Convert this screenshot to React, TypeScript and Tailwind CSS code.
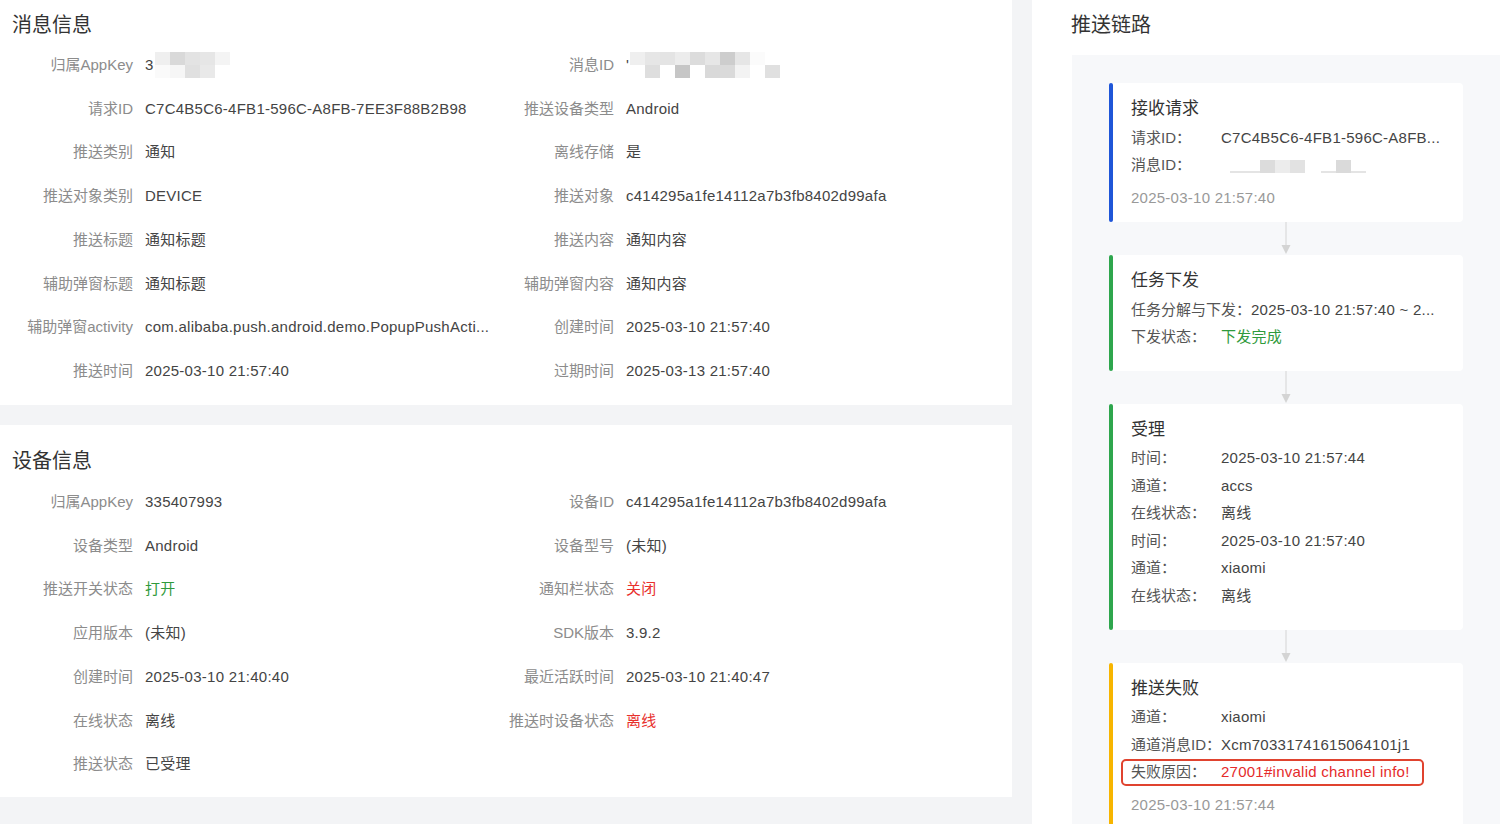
import React from 'react';

type Cell = string;

// 马赛克块（遮挡的敏感信息）
function Mosaic({ rows, cell = 'w-[15px] h-[13px]' }: { rows: Cell[][]; cell?: string }) {
  return (
    <div className="inline-flex flex-col align-middle">
      {rows.map((r, i) => (
        <div key={i} className="flex">
          {r.map((c, j) => (
            <div key={j} className={`${cell} ${c}`} />
          ))}
        </div>
      ))}
    </div>
  );
}

const appKeyBlur: Cell[][] = [
  ['bg-[#efefef]', 'bg-[#d9d9d9]', 'bg-[#e3e3e3]', 'bg-[#e6e6e6]', 'bg-[#f4f4f4]'],
  ['bg-[#fafafa]', 'bg-[#f6f6f6]', 'bg-[#e0e0e0]', 'bg-[#e9e9e9]', 'bg-white'],
];

const msgIdBlur: Cell[][] = [
  ['bg-[#efefef]', 'bg-[#e6e6e6]', 'bg-[#e4e4e4]', 'bg-[#ececec]', 'bg-[#dcdcdc]', 'bg-[#e6e6e6]', 'bg-[#cdcdcd]', 'bg-[#e6e6e6]', 'bg-[#fbfbfb]', 'bg-white'],
  ['bg-white', 'bg-[#dedede]', 'bg-white', 'bg-[#c6c6c6]', 'bg-white', 'bg-[#d9d9d9]', 'bg-[#dadada]', 'bg-[#f3f3f3]', 'bg-white', 'bg-[#e0e0e0]'],
];

function Field({
  label,
  children,
  labelW = 'w-[133px]',
  valueClass = 'text-[#444]',
}: {
  label?: string;
  children?: React.ReactNode;
  labelW?: string;
  valueClass?: string;
}) {
  return (
    <div className="flex items-center h-[43.7px] min-w-0">
      <div className={`${labelW} shrink-0 text-right text-[#8c8c8c] whitespace-nowrap`}>{label}</div>
      <div className={`ml-3 min-w-0 whitespace-nowrap tracking-[0.25px] ${valueClass}`}>{children}</div>
    </div>
  );
}

type Row = [string, React.ReactNode, string?];

function InfoPanel({
  title,
  rows,
  className,
  gridMt,
}: {
  title: string;
  rows: [Row, Row | null][];
  className: string;
  gridMt: string;
}) {
  return (
    <section className={`bg-white ${className}`}>
      <h2 className="pl-3 text-[20px] leading-[28px] text-[#333]">{title}</h2>
      <div className={`grid grid-cols-[493px_1fr] ${gridMt}`}>
        {rows.map(([a, b], i) => (
          <React.Fragment key={i}>
            <Field label={a[0]} valueClass={a[2] ?? 'text-[#444]'}>{a[1]}</Field>
            {b ? (
              <Field label={b[0]} labelW="w-[121px]" valueClass={b[2] ?? 'text-[#444]'}>{b[1]}</Field>
            ) : (
              <div />
            )}
          </React.Fragment>
        ))}
      </div>
    </section>
  );
}

function Arrow() {
  return (
    <div className="flex justify-center w-[354px] h-[33px]">
      <svg width="12" height="33" viewBox="0 0 12 33">
        <line x1="6" y1="0" x2="6" y2="25" stroke="#d4d4d4" strokeWidth="1" />
        <path d="M1.5 23 L10.5 23 L6 32 Z" fill="#d4d4d4" />
      </svg>
    </div>
  );
}

function Card({
  bar,
  title,
  children,
  pb = 'pb-[20px]',
}: {
  bar: string;
  title: string;
  children: React.ReactNode;
  pb?: string;
}) {
  return (
    <div className="flex w-[354px] bg-white rounded-[4px]">
      <div className={`w-[4px] shrink-0 rounded-[2px] ${bar}`} />
      <div className={`flex-1 min-w-0 pl-[18px] pr-[18px] pt-[13px] ${pb}`}>
        <div className="text-[17px] leading-[26px] text-[#333] mb-[2px]">{title}</div>
        {children}
      </div>
    </div>
  );
}

function KV({ k, v, vClass = 'text-[#444]' }: { k: string; v: React.ReactNode; vClass?: string }) {
  return (
    <div className="flex items-center h-[27.5px]">
      <div className="min-w-[90px] shrink-0 text-[#555] whitespace-nowrap">{k}</div>
      <div className={`min-w-0 whitespace-nowrap tracking-[0.25px] ${vClass}`}>{v}</div>
    </div>
  );
}

function Stamp({ t }: { t: string }) {
  return <div className="mt-[5px] h-[27.5px] leading-[27.5px] text-[#999] tracking-[0.25px]">{t}</div>;
}

export default function App() {
  const msgRows: [Row, Row | null][] = [
    [
      ['归属AppKey', <span className="inline-flex items-center">3<span className="ml-[1px]"><Mosaic rows={appKeyBlur} /></span></span>],
      ['消息ID', <span className="inline-flex items-center">'<span className="ml-[1px]"><Mosaic rows={msgIdBlur} /></span></span>],
    ],
    [['请求ID', 'C7C4B5C6-4FB1-596C-A8FB-7EE3F88B2B98'], ['推送设备类型', 'Android']],
    [['推送类别', '通知'], ['离线存储', '是']],
    [['推送对象类别', 'DEVICE'], ['推送对象', 'c414295a1fe14112a7b3fb8402d99afa']],
    [['推送标题', '通知标题'], ['推送内容', '通知内容']],
    [['辅助弹窗标题', '通知标题'], ['辅助弹窗内容', '通知内容']],
    [['辅助弹窗activity', 'com.alibaba.push.android.demo.PopupPushActi...'], ['创建时间', '2025-03-10 21:57:40']],
    [['推送时间', '2025-03-10 21:57:40'], ['过期时间', '2025-03-13 21:57:40']],
  ];

  const devRows: [Row, Row | null][] = [
    [['归属AppKey', '335407993'], ['设备ID', 'c414295a1fe14112a7b3fb8402d99afa']],
    [['设备类型', 'Android'], ['设备型号', '(未知)']],
    [['推送开关状态', '打开', 'text-[#2f9a3c]'], ['通知栏状态', '关闭', 'text-[#e8302c]']],
    [['应用版本', '(未知)'], ['SDK版本', '3.9.2']],
    [['创建时间', '2025-03-10 21:40:40'], ['最近活跃时间', '2025-03-10 21:40:47']],
    [['在线状态', '离线'], ['推送时设备状态', '离线', 'text-[#e8302c]']],
    [['推送状态', '已受理'], null],
  ];

  return (
    <div className="h-[824px] w-[1500px] overflow-hidden bg-[#f3f4f6] flex gap-5 text-[15px] font-['Liberation_Sans','Noto_Sans_CJK_SC',sans-serif]">
      {/* 左侧 */}
      <div className="w-[1012px] shrink-0 flex flex-col gap-5">
        <InfoPanel title="消息信息" rows={msgRows} className="pt-[11px] pb-[12px]" gridMt="mt-[4.5px]" />
        <InfoPanel title="设备信息" rows={devRows} className="pt-[22px] pb-[11px]" gridMt="mt-[5.5px]" />
      </div>

      {/* 推送链路 */}
      <div className="flex-1 bg-white flex flex-col min-w-0">
        <h2 className="pl-[39px] pt-[11px] text-[20px] leading-[28px] text-[#333]">推送链路</h2>
        <div className="ml-[40px] mt-[16px] flex-1 bg-[#f7f8fa] pl-[37px] pt-[28px]">
          <Card bar="bg-[#1f56d8]" title="接收请求" pb="pb-[10px]">
            <KV k="请求ID：" v="C7C4B5C6-4FB1-596C-A8FB..." />
            <KV
              k="消息ID："
              v={
                <span className="inline-flex items-end gap-[16px] ml-[9px] align-middle">
                  <span className="flex items-end h-[14px]">
                    <span className="w-[30px] h-[2px] bg-[#e4e4e4]" />
                    <span className="w-[15px] h-[13px] bg-[#dcdcdc]" />
                    <span className="w-[15px] h-[13px] bg-[#ececec]" />
                    <span className="w-[15px] h-[13px] bg-[#e2e2e2]" />
                  </span>
                  <span className="flex items-end h-[14px]">
                    <span className="w-[15px] h-[2px] bg-[#e4e4e4]" />
                    <span className="w-[15px] h-[13px] bg-[#dadada]" />
                    <span className="w-[15px] h-[2px] bg-[#e4e4e4]" />
                  </span>
                </span>
              }
            />
            <Stamp t="2025-03-10 21:57:40" />
          </Card>
          <Arrow />
          <Card bar="bg-[#2ea64d]" title="任务下发">
            <div className="h-[27.5px] leading-[27.5px] whitespace-nowrap text-[#555]">
              任务分解与下发：<span className="text-[#444] tracking-[0.25px]">2025-03-10 21:57:40 ~ 2...</span>
            </div>
            <KV k="下发状态：" v="下发完成" vClass="text-[#2f9a3c]" />
          </Card>
          <Arrow />
          <Card bar="bg-[#2ea64d]" title="受理">
            <KV k="时间：" v="2025-03-10 21:57:44" />
            <KV k="通道：" v="accs" />
            <KV k="在线状态：" v="离线" />
            <KV k="时间：" v="2025-03-10 21:57:40" />
            <KV k="通道：" v="xiaomi" />
            <KV k="在线状态：" v="离线" />
          </Card>
          <Arrow />
          <Card bar="bg-[#f7b500]" title="推送失败">
            <KV k="通道：" v="xiaomi" />
            <KV k="通道消息ID：" v="Xcm70331741615064101j1" />
            <div className="flex items-center h-[27.5px] w-[303px] ml-[-10px] pl-[8px] border-2 border-[#e0432f] rounded-[5px]">
              <div className="min-w-[90px] shrink-0 text-[#555]">失败原因：</div>
              <div className="whitespace-nowrap tracking-[0.25px] text-[#e52b2b]">27001#invalid channel info!</div>
            </div>
            <Stamp t="2025-03-10 21:57:44" />
          </Card>
        </div>
      </div>
    </div>
  );
}
